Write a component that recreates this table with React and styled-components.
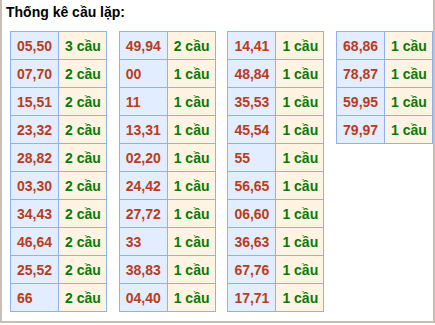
import styled, { createGlobalStyle } from "styled-components";

const columns = [
  [
    ["05,50", 3],
    ["07,70", 2],
    ["15,51", 2],
    ["23,32", 2],
    ["28,82", 2],
    ["03,30", 2],
    ["34,43", 2],
    ["46,64", 2],
    ["25,52", 2],
    ["66", 2],
  ],
  [
    ["49,94", 2],
    ["00", 1],
    ["11", 1],
    ["13,31", 1],
    ["02,20", 1],
    ["24,42", 1],
    ["27,72", 1],
    ["33", 1],
    ["38,83", 1],
    ["04,40", 1],
  ],
  [
    ["14,41", 1],
    ["48,84", 1],
    ["35,53", 1],
    ["45,54", 1],
    ["55", 1],
    ["56,65", 1],
    ["06,60", 1],
    ["36,63", 1],
    ["67,76", 1],
    ["17,71", 1],
  ],
  [
    ["68,86", 1],
    ["78,87", 1],
    ["59,95", 1],
    ["79,97", 1],
  ],
];

const App = () => {
  return (
    <>
      <GlobalStyle />
      <Box>
        <Title>Thống kê cầu lặp:</Title>
        <Tables>
          {columns.map((rows, i) => (
            <Table key={i}>
              {rows.map(([pair, count]) => (
                <Row key={pair}>
                  <PairCell>{pair}</PairCell>
                  <CountCell>{count} cầu</CountCell>
                </Row>
              ))}
            </Table>
          ))}
        </Tables>
      </Box>
    </>
  );
};

const GlobalStyle = createGlobalStyle`
  body {
    margin: 0;
    background: #ffffff;
    font-family: "Liberation Sans", Arial, sans-serif;
  }
`;
const Box = styled.div`
  box-sizing: border-box;
  width: 435px;
  height: 323px;

  border: 2px solid #c8beb3;
  border-top: none;

  padding-left: 4px;
`;
const Title = styled.div`
  padding-top: 4px;

  font-weight: 700;
  font-size: 14px;
  line-height: 16px;

  color: #000000;
`;
const Tables = styled.div`
  display: grid;
  grid-template-columns: repeat(4, 97px);
  column-gap: 11.7px;
  align-items: start;

  margin-top: 11px;
  padding-left: 4px;
`;
const Table = styled.div`
  display: grid;
  grid-template-columns: 48px 48px;

  border-top: 1px solid #8fb2ee;
  border-left: 1px solid #8fb2ee;
`;
const Row = styled.div`
  display: contents;
`;
const Cell = styled.div`
  box-sizing: border-box;
  height: 28px;

  display: flex;
  align-items: center;

  padding-left: 6px;

  border-right: 1px solid #8fb2ee;
  border-bottom: 1px solid #8fb2ee;

  font-weight: 700;
  font-size: 14px;
  white-space: nowrap;
`;
const PairCell = styled(Cell)`
  background: #e2edff;
  color: #b73d1c;
`;
const CountCell = styled(Cell)`
  background: #fff4e2;
  color: #087a08;
`;
export default App;
